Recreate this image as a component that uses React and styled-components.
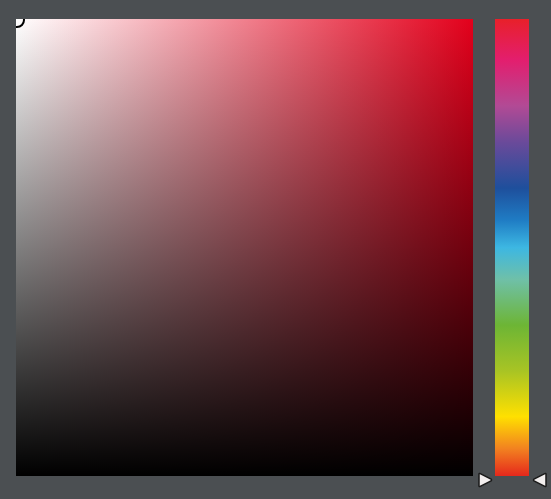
import React from "react";
import styled, { createGlobalStyle } from "styled-components";

const G = createGlobalStyle`
  html, body { margin: 0; background: #4b4f52; }
`;
const Page = styled.div`
  width: 551px; height: 499px; background: #4b4f52;
  display: flex; align-items: flex-start; padding: 19px 0 0 16px; box-sizing: border-box; gap: 22px;
`;
const Square = styled.div`
  position: relative; overflow: hidden;
  width: 457px; height: 457px;
  background: linear-gradient(to bottom, rgba(0,0,0,0), #000),
    linear-gradient(to right, #fff, #e3001b);
`;
const Cursor = styled.div`
  position: absolute; left: -7px; top: -7px; width: 12px; height: 12px;
  border: 2px solid #000; border-radius: 50%;
`;
const HueWrap = styled.div`
  position: relative; width: 34px; height: 457px;
`;
const Hue = styled.div`
  width: 100%; height: 100%;
  background: linear-gradient(to bottom, #e8202a 0%, #e31e6e 9%, #b24a95 19%, #6a4a9a 27%, #1e4f9c 37%, #1f7cc4 44%, #3db7e2 50%, #6fc0a8 57%, #6db535 67%, #a8c424 77%, #ffe000 87%, #f28220 94%, #e5281c 100%);
`;
const Arrow = styled.svg`
  position: absolute; bottom: -12px; width: 16px; height: 16px;
  ${(p) => (p.$left ? "left: -18px;" : "right: -19px;")}
`;

export default function App() {
  return (
    <>
      <G />
      <Page>
        <Square><Cursor /></Square>
        <HueWrap>
          <Hue />
          <Arrow $left viewBox="0 0 16 16">
            <path d="M2 2 Q2 1 3.2 1.6 L14 7 Q15 8 14 9 L3.2 14.4 Q2 15 2 14 Z" fill="#f2eeee" stroke="#1a1a1a" strokeWidth="1.5" />
          </Arrow>
          <Arrow viewBox="0 0 16 16">
            <path d="M14 2 Q14 1 12.8 1.6 L2 7 Q1 8 2 9 L12.8 14.4 Q14 15 14 14 Z" fill="#f2eeee" stroke="#1a1a1a" strokeWidth="1.5" />
          </Arrow>
        </HueWrap>
      </Page>
    </>
  );
}
